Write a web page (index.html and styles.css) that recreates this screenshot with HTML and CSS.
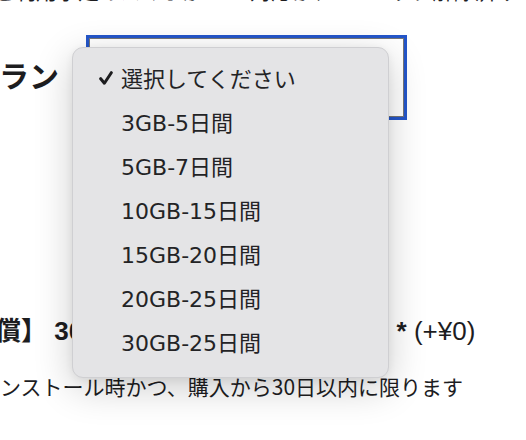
FILE: index.html
```html
<!DOCTYPE html>
<html lang="ja">
<head>
<meta charset="utf-8">
<title>プラン選択</title>
<link rel="stylesheet" href="styles.css">
</head>
<body>
<main class="page">
  <p class="note note-top">ご利用予定のスマホがeSIM対応か、SIMロック解除済みのものかご確認ください</p>
  <div class="field">
    <span class="field-label">プラン</span>
    <div class="select-wrap">
      <div class="select" aria-hidden="true"></div>
      <ul class="menu" role="listbox">
        <li class="menu-item is-selected"><span class="check"><svg viewBox="0 0 14 14" width="14" height="14"><path d="M1.7 7.7 L5.4 12.2 L12.3 1.7" fill="none" stroke="#1d1d1f" stroke-width="3" stroke-linecap="round" stroke-linejoin="round"/></svg></span><span class="label">選択してください</span></li>
        <li class="menu-item"><span class="check"></span><span class="label">3GB-5日間</span></li>
        <li class="menu-item"><span class="check"></span><span class="label">5GB-7日間</span></li>
        <li class="menu-item"><span class="check"></span><span class="label">10GB-15日間</span></li>
        <li class="menu-item"><span class="check"></span><span class="label">15GB-20日間</span></li>
        <li class="menu-item"><span class="check"></span><span class="label">20GB-25日間</span></li>
        <li class="menu-item"><span class="check"></span><span class="label">30GB-25日間</span></li>
      </ul>
    </div>
  </div>
  <h3 class="option-title">【端末補償】 30日間SIM返金保証サービス <span class="req">*</span> <span class="price">(+¥0)</span></h3>
  <p class="note note-bottom">※補償の適用は初回インストール時かつ、購入から30日以内に限ります</p>
</main>
</body>
</html>
```

FILE: styles.css
```css
html, body {
  margin: 0;
  padding: 0;
  background: #ffffff;
}
body {
  width: 526px;
  height: 440px;
  overflow: hidden;
  font-family: "Noto Sans CJK JP", "Noto Sans", sans-serif;
  color: #1d1d1f;
}
.page {
  display: flex;
  flex-direction: column;
}
.note {
  margin: 0;
  font-size: 21px;
  line-height: 30px;
  white-space: nowrap;
  color: #1d1d1f;
}
.note-top {
  margin-top: -25px;
  margin-left: -6px;
}
.field {
  display: flex;
  align-items: center;
  gap: 30px;
  margin-top: 33px;
}
.field-label {
  font-size: 30px;
  font-weight: 700;
  line-height: 40px;
  margin-left: -31px;
  margin-bottom: 8px;
  white-space: nowrap;
}
.select-wrap {
  position: relative;
}
.select {
  width: 313px;
  height: 77px;
  border: 1px solid #767676;
  background: #ffffff;
  box-shadow: 0 0 0 3px #2456c9;
}
.menu {
  position: absolute;
  left: -17px;
  top: 9px;
  width: 315px;
  margin: 0;
  padding: 7px 0 14px;
  list-style: none;
  background: #e4e4e6;
  border: 1px solid #cfcfd2;
  border-radius: 11px;
  box-shadow: 0 10px 38px rgba(0, 0, 0, 0.2), 0 2px 8px rgba(0, 0, 0, 0.06);
}
.menu-item {
  display: flex;
  align-items: center;
  height: 44px;
  padding-left: 26px;
  font-family: "DejaVu Sans", "Noto Sans CJK JP", sans-serif;
  font-size: 22px;
  color: #232325;
  white-space: nowrap;
}
.check {
  display: flex;
  align-items: center;
  width: 22px;
  flex: none;
  padding-top: 2px;
}
.option-title {
  margin: 196px 0 0 -109px;
  font-family: "Liberation Sans", "Noto Sans CJK JP", sans-serif;
  font-size: 26px;
  font-weight: 700;
  line-height: 36px;
  white-space: nowrap;
}
.req {
  font-weight: 700;
}
.price {
  font-weight: 400;
}
.note-bottom {
  margin-top: 22px;
  margin-left: -210px;
}
```
